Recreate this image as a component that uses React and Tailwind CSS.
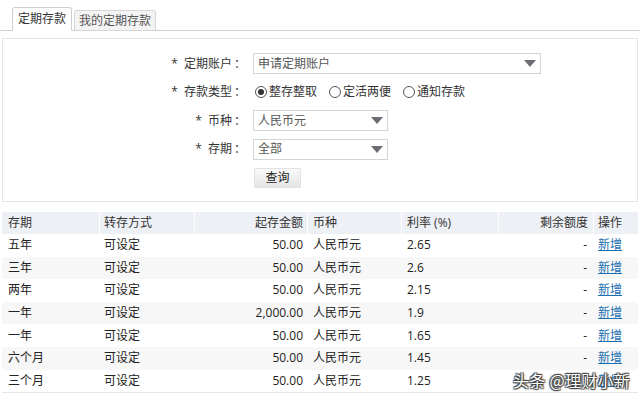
import React from "react";

const rows = [
  ["五年", "可设定", "50.00", "人民币元", "2.65"],
  ["三年", "可设定", "50.00", "人民币元", "2.6"],
  ["两年", "可设定", "50.00", "人民币元", "2.15"],
  ["一年", "可设定", "2,000.00", "人民币元", "1.9"],
  ["一年", "可设定", "50.00", "人民币元", "1.65"],
  ["六个月", "可设定", "50.00", "人民币元", "1.45"],
  ["三个月", "可设定", "50.00", "人民币元", "1.25"],
];

const font = { fontFamily: '"Open Sans", "Noto Sans CJK SC", sans-serif' };

function Arrow() {
  return (
    <svg width="12" height="7" viewBox="0 0 12 7">
      <path d="M0 0 L12 0 L6 7 Z" fill="#6b6f75" />
    </svg>
  );
}

function Select({ text, w }) {
  return (
    <div className={`h-[21px] ${w} border border-[#d4d4d4] bg-white flex items-center justify-between pl-[4px] pr-[4px] text-[#555]`}>
      <span>{text}</span>
      <Arrow />
    </div>
  );
}

function Label({ text }) {
  return (
    <div className="w-[250px] flex justify-end items-center pr-[7px] text-[#333]">
      <span className="mr-[6px] text-[#333]">*</span>
      <span>{text}</span>
      <span className="ml-[2px]">：</span>
    </div>
  );
}

function Radio({ checked, label }) {
  return (
    <div className="flex items-center mr-[12px]">
      <span className="w-[12px] h-[12px] rounded-full border border-[#555] bg-white flex items-center justify-center mr-[2px]">
        {checked && <span className="w-[6px] h-[6px] rounded-full bg-[#333]" />}
      </span>
      <span>{label}</span>
    </div>
  );
}

export default function App() {
  return (
    <div className="w-[640px] h-[399px] bg-white text-[12px] text-[#333] relative overflow-hidden" style={font}>
      {/* tabs */}
      <div className="flex items-end h-[31px] pl-[12px] border-b border-[#cfcfcf]">
        <div className="h-[24px] w-[60px] border border-[#cfcfcf] border-b-white rounded-t-[3px] bg-white flex items-center justify-center -mb-px text-[#333]">
          定期存款
        </div>
        <div className="h-[21px] w-[82px] ml-[2px] border border-[#d6d6d6] rounded-t-[2px] bg-[#f3f3f3] flex items-center justify-center -mb-px text-[#555]">
          我的定期存款
        </div>
      </div>

      {/* form */}
      <div className="mx-[2px] mt-[7px] h-[164px] border border-[#e6e6e6] pt-[14px] flex flex-col">
        <div className="flex items-center h-[21px]">
          <Label text="定期账户" />
          <Select text="申请定期账户" w="w-[288px]" />
        </div>
        <div className="flex items-center h-[21px] mt-[7.5px]">
          <Label text="存款类型" />
          <div className="flex items-center pl-[2px]">
            <Radio checked label="整存整取" />
            <Radio label="定活两便" />
            <Radio label="通知存款" />
          </div>
        </div>
        <div className="flex items-center h-[21px] mt-[7.5px]">
          <Label text="币种" />
          <Select text="人民币元" w="w-[135px]" />
        </div>
        <div className="flex items-center h-[21px] mt-[7.5px]">
          <Label text="存期" />
          <Select text="全部" w="w-[135px]" />
        </div>
        <div className="flex items-center h-[21px] mt-[7.5px] pl-[251px]">
          <div className="h-[20px] w-[47px] rounded-[2px] border border-[#e2e2e2] bg-gradient-to-b from-[#fafafa] to-[#e4e4e4] flex items-center justify-center text-[#222]">
            查询
          </div>
        </div>
      </div>

      {/* table */}
      <div className="mx-[2px] mt-[10px] w-[636px]">
        <div className="flex h-[22px] bg-[#edf0f5] items-center text-[#333]">
          <div className="w-[97px] pl-[6px]">存期</div>
          <div className="w-[95px] pl-[4px] border-l border-white h-full flex items-center">转存方式</div>
          <div className="w-[113px] pr-[4px] border-l border-white h-full flex items-center justify-end">起存金额</div>
          <div className="w-[94px] pl-[5px] border-l border-white h-full flex items-center">币种</div>
          <div className="w-[97px] pl-[5px] border-l border-white h-full flex items-center">利率 (%)</div>
          <div className="w-[95px] pr-[5px] border-l border-white h-full flex items-center justify-end">剩余额度</div>
          <div className="w-[45px] pl-[4px] border-l border-white h-full flex items-center">操作</div>
        </div>
        {rows.map((r, i) => (
          <div key={i} className={`flex h-[22.6px] items-center text-[#222] ${i % 2 === 1 ? "bg-[#f7f7f7]" : "bg-white"}`}>
            <div className="w-[97px] pl-[6px]">{r[0]}</div>
            <div className="w-[95px] pl-[5px]">{r[1]}</div>
            <div className="w-[113px] pr-[4px] text-right">{r[2]}</div>
            <div className="w-[94px] pl-[6px]">{r[3]}</div>
            <div className="w-[97px] pl-[6px]">{r[4]}</div>
            <div className="w-[95px] pr-[6px] text-right">-</div>
            <div className="w-[45px] pl-[5px]">
              <span className="text-[#1a6fb0] underline">新增</span>
            </div>
          </div>
        ))}
        <div className="h-px bg-[#e6e6e6]" />
      </div>

      {/* watermark */}
      <div
        className="absolute left-[513px] top-[368px] text-[16px] text-white tracking-[0.3px]"
        style={{
          fontFamily: '"Noto Sans CJK SC", sans-serif',
          textShadow:
            "0 0 1px #333, 1px 1px 1px #444, -1px -1px 1px #444, 1px -1px 1px #444, -1px 1px 1px #444",
        }}
      >
        头条 @理财小新
      </div>
    </div>
  );
}
